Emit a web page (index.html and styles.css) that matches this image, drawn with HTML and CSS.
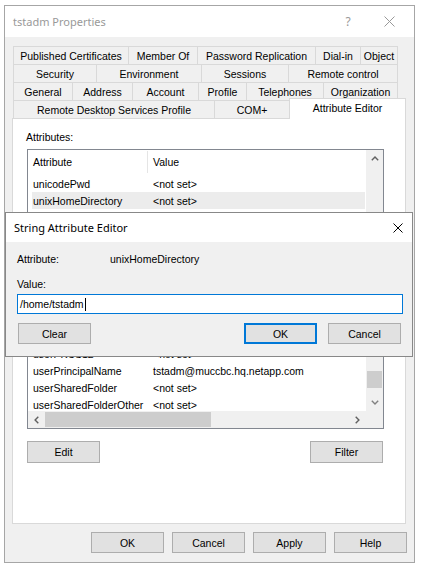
FILE: index.html
```html
<!DOCTYPE html>
<html>
<head>
<meta charset="utf-8">
<title>tstadm Properties</title>
<link rel="stylesheet" href="styles.css">
</head>
<body>
<div class="window">
  <div class="titlebar">
    <span class="title inactive">tstadm Properties</span>
    <span class="tb-help">?</span>
    <span class="tb-close">
      <svg width="11" height="11" viewBox="0 0 11 11"><path d="M0.5 0.5 L10.5 10.5 M10.5 0.5 L0.5 10.5" stroke="#999" stroke-width="1" fill="none"/></svg>
    </span>
  </div>

  <div class="tabs">
    <div class="tabrow r1">
      <div class="tab">Published Certificates</div>
      <div class="tab">Member Of</div>
      <div class="tab">Password Replication</div>
      <div class="tab">Dial-in</div>
      <div class="tab">Object</div>
    </div>
    <div class="tabrow r2">
      <div class="tab">Security</div>
      <div class="tab">Environment</div>
      <div class="tab">Sessions</div>
      <div class="tab">Remote control</div>
    </div>
    <div class="tabrow r3">
      <div class="tab">General</div>
      <div class="tab">Address</div>
      <div class="tab">Account</div>
      <div class="tab">Profile</div>
      <div class="tab">Telephones</div>
      <div class="tab">Organization</div>
    </div>
    <div class="tabrow r4">
      <div class="tab">Remote Desktop Services Profile</div>
      <div class="tab">COM+</div>
      <div class="tab sel">Attribute Editor</div>
    </div>
  </div>

  <div class="panel">
    <div class="lbl">Attributes:</div>
    <div class="list">
      <div class="list-body">
        <div class="list-head">
          <div class="hcol h1">Attribute</div>
          <div class="hcol h2">Value</div>
        </div>
        <div class="row"><span class="c1">unicodePwd</span><span class="c2">&lt;not set&gt;</span></div>
        <div class="row selected"><span class="c1">unixHomeDirectory</span><span class="c2">&lt;not set&gt;</span></div>
        <div class="row"></div>
        <div class="row"></div>
        <div class="row"></div>
        <div class="row"></div>
        <div class="row"></div>
        <div class="row"></div>
        <div class="row"></div>
        <div class="row"></div>
        <div class="row"><span class="c1">userPKCS12</span><span class="c2">&lt;not set&gt;</span></div>
        <div class="row"><span class="c1">userPrincipalName</span><span class="c2">tstadm@muccbc.hq.netapp.com</span></div>
        <div class="row"><span class="c1">userSharedFolder</span><span class="c2">&lt;not set&gt;</span></div>
        <div class="row"><span class="c1">userSharedFolderOther</span><span class="c2">&lt;not set&gt;</span></div>
      </div>
      <div class="vscroll">
        <div class="arrow">
          <svg width="8" height="5" viewBox="0 0 8 5"><polyline points="0.8,4.3 4,1.1 7.2,4.3" fill="none" stroke="#606060" stroke-width="1.4"/></svg>
        </div>
        <div class="vthumb" style="margin-top:204px"></div>
        <div class="arrow down">
          <svg width="8" height="5" viewBox="0 0 8 5"><polyline points="0.8,0.7 4,3.9 7.2,0.7" fill="none" stroke="#808080" stroke-width="1.4"/></svg>
        </div>
      </div>
      <div class="hscroll">
        <div class="arrow">
          <svg width="5" height="8" viewBox="0 0 5 8"><polyline points="4.3,0.8 1.1,4 4.3,7.2" fill="none" stroke="#606060" stroke-width="1.4"/></svg>
        </div>
        <div class="hthumb" style="width:166px"></div>
        <div class="hspace"></div>
        <div class="arrow">
          <svg width="5" height="8" viewBox="0 0 5 8"><polyline points="0.7,0.8 3.9,4 0.7,7.2" fill="none" stroke="#606060" stroke-width="1.4"/></svg>
        </div>
      </div>
      <div class="corner"></div>
    </div>
    <div class="panel-buttons">
      <button class="btn">Edit</button>
      <button class="btn">Filter</button>
    </div>
  </div>

  <div class="footer">
    <button class="btn">OK</button>
    <button class="btn">Cancel</button>
    <button class="btn">Apply</button>
    <button class="btn">Help</button>
  </div>

  <div class="dialog">
    <div class="dlg-title">
      <span class="title">String Attribute Editor</span>
      <span class="dlg-close">
        <svg width="10" height="10" viewBox="0 0 10 10"><path d="M0.5 0.5 L9.5 9.5 M9.5 0.5 L0.5 9.5" stroke="#000" stroke-width="1" fill="none"/></svg>
      </span>
    </div>
    <div class="dlg-body">
      <div class="attr-line">
        <span class="attr-lbl">Attribute:</span>
        <span class="attr-val">unixHomeDirectory</span>
      </div>
      <div class="value-lbl">Value:</div>
      <div class="input"><span class="input-text">/home/tstadm</span><span class="caret"></span></div>
      <div class="dlg-buttons">
        <button class="btn clear">Clear</button>
        <button class="btn default">OK</button>
        <button class="btn">Cancel</button>
      </div>
    </div>
  </div>
</div>
</body>
</html>
```

FILE: styles.css
```css
* {
  box-sizing: border-box;
}

html, body {
  margin: 0;
  padding: 0;
  background: #ffffff;
}

body {
  padding: 5px 0 0 4px;
  font-family: "Liberation Sans", Arial, sans-serif;
  font-size: 10.5px;
  color: #000;
}

.window {
  position: relative;
  width: 411px;
  height: 558px;
  border: 1px solid #a6a6a6;
  background: #f0f0f0;
}

/* title bar */
.titlebar {
  height: 31px;
  background: #ffffff;
  display: flex;
  align-items: center;
  padding-left: 8px;
  padding-right: 15px;
}

.title {
  font-family: "Noto Sans", "Open Sans", sans-serif;
  font-size: 11px;
  color: #000;
}

.title.inactive {
  color: #999999;
}

.tb-help {
  margin-left: auto;
  width: 20px;
  text-align: center;
  font-family: "Noto Sans", sans-serif;
  font-size: 12px;
  color: #999999;
}

.tb-close {
  margin-left: 21px;
  width: 20px;
  display: flex;
  justify-content: center;
}

/* tabs */
.tabs {
  margin: 9px 0 0 8px;
}

.tabrow {
  display: grid;
  height: 18px;
}

.r1 { grid-template-columns: 115px 69px 118px 45px 38px; }
.r2 { grid-template-columns: 83px 105px 87px 110px; }
.r3 { grid-template-columns: 59px 60px 66px 48px 77px 75px; }
.r4 { grid-template-columns: 201px 75px 117px; }

.tab {
  border-top: 1px solid #d9d9d9;
  border-left: 1px solid #d9d9d9;
  display: flex;
  align-items: center;
  justify-content: center;
  white-space: nowrap;
  background: #f0f0f0;
}

.tab:last-child {
  border-right: 1px solid #d9d9d9;
}

.tab.sel {
  position: relative;
  z-index: 1;
  background: #ffffff;
  margin-top: -2px;
  margin-bottom: -1px;
  padding-bottom: 2px;
}

/* tab page */
.panel {
  margin-left: 7px;
  width: 394px;
  height: 406px;
  background: #ffffff;
  border: 1px solid #d9d9d9;
  padding: 12px 0 0 14px;
}

.lbl {
  height: 13px;
  line-height: 13px;
  margin-left: -1px;
}

.list {
  margin-top: 5px;
  width: 357px;
  height: 280px;
  border: 1px solid #828790;
  display: grid;
  grid-template-columns: 1fr 17px;
  grid-template-rows: 1fr 17px;
  background: #ffffff;
}

.list-body {
  overflow: hidden;
}

.list-head {
  height: 25px;
  display: flex;
  align-items: flex-start;
}

.hcol {
  display: flex;
  align-items: center;
  height: 22px;
  margin-top: 1px;
}

.h1 {
  width: 120px;
  padding-left: 5px;
  border-right: 1px solid #e5e5e5;
}

.h2 {
  padding-left: 5px;
}

.row {
  height: 17px;
  margin: 0 1px 0 4px;
  display: flex;
  align-items: center;
  white-space: nowrap;
}

.row.selected {
  background: #ececec;
}

.c1 {
  width: 116px;
  padding-left: 1px;
  flex: none;
}

.c2 {
  padding-left: 5px;
}

.vscroll {
  background: #f0f0f0;
  display: flex;
  flex-direction: column;
}

.arrow {
  width: 17px;
  height: 17px;
  flex: none;
  display: flex;
  align-items: center;
  justify-content: center;
}

.arrow.down {
  margin-top: auto;
}

.vthumb {
  height: 17px;
  margin-left: 1px;
  margin-right: 1px;
  background: #cdcdcd;
  flex: none;
}

.hscroll {
  background: #f0f0f0;
  display: flex;
}

.hthumb {
  margin: 1px 0;
  background: #cdcdcd;
  flex: none;
}

.hspace {
  flex: 1;
}

.corner {
  background: #f0f0f0;
}

.panel-buttons {
  margin-top: 12px;
  width: 356px;
  display: flex;
  justify-content: space-between;
}

.panel-buttons .btn {
  height: 22px;
}

/* buttons */
.btn {
  width: 73px;
  height: 21px;
  margin: 0;
  padding: 0;
  background: #e1e1e1;
  border: 1px solid #adadad;
  font-family: "Liberation Sans", Arial, sans-serif;
  font-size: 10.5px;
  color: #000;
}

.footer {
  margin-top: 8px;
  display: flex;
  justify-content: flex-end;
  gap: 8px;
  padding-right: 7px;
}

/* modal dialog */
.dialog {
  position: absolute;
  left: 0;
  top: 206px;
  width: 408px;
  height: 145px;
  border: 1px solid #888888;
  background: #f0f0f0;
  z-index: 5;
}

.dlg-title {
  height: 29px;
  background: #ffffff;
  display: flex;
  align-items: center;
  padding-left: 8px;
  padding-right: 9px;
}

.dlg-close {
  margin-left: auto;
  display: flex;
}

.dlg-body {
  padding: 11px 0 0 11px;
}

.attr-line {
  display: flex;
  height: 13px;
  line-height: 13px;
}

.attr-lbl {
  width: 93px;
}

.value-lbl {
  margin-top: 12px;
  height: 13px;
  line-height: 13px;
}

.input {
  margin-top: 3px;
  width: 386px;
  height: 20px;
  border: 1px solid #0078d7;
  background: #ffffff;
  display: flex;
  align-items: center;
  padding-left: 2px;
}

.caret {
  width: 1px;
  height: 13px;
  background: #000;
  margin-left: 1px;
}

.dlg-buttons {
  margin-top: 9px;
  width: 384px;
  display: flex;
  gap: 11px;
}

.btn.clear {
  margin-left: 1px;
  margin-right: auto;
}

.btn.default {
  border: 2px solid #0078d7;
}
```
